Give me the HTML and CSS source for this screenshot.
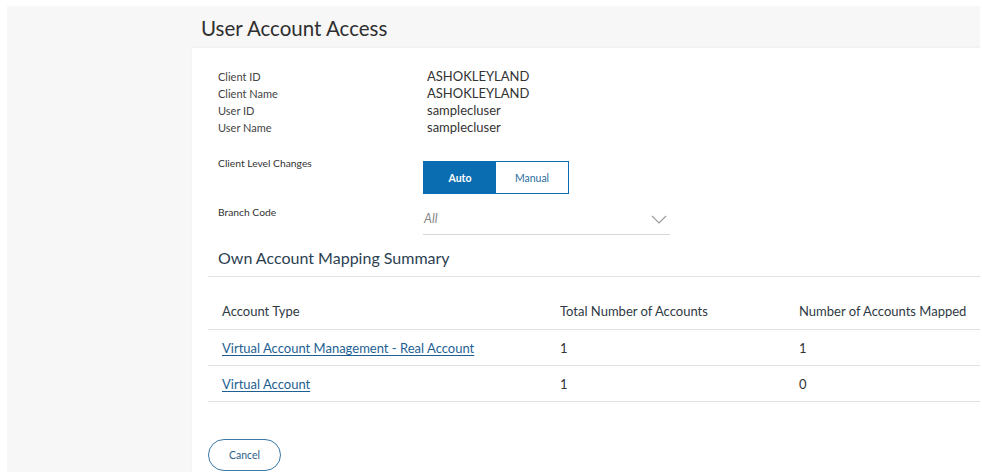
FILE: index.html
```html
<!DOCTYPE html>
<html lang="en">
<head>
<meta charset="utf-8">
<title>User Account Access</title>
<link rel="stylesheet" href="styles.css">
</head>
<body>
<div class="shell">
  <aside class="side"></aside>
  <header class="page-head">
    <h1 class="page-title">User Account Access</h1>
  </header>
  <main class="panel">
    <dl class="info">
      <dt>Client ID</dt><dd>ASHOKLEYLAND</dd>
      <dt>Client Name</dt><dd>ASHOKLEYLAND</dd>
      <dt>User ID</dt><dd>samplecluser</dd>
      <dt>User Name</dt><dd>samplecluser</dd>
    </dl>

    <div class="field field-toggle">
      <span class="field-label">Client Level Changes</span>
      <div class="toggle">
        <button class="toggle-btn active">Auto</button>
        <button class="toggle-btn">Manual</button>
      </div>
    </div>

    <div class="field field-select">
      <span class="field-label">Branch Code</span>
      <div class="select">
        <span class="select-value">All</span>
        <svg class="chevron" width="16" height="9" viewBox="0 0 16 9"><polyline points="1,1 8,8 15,1" fill="none" stroke="#9a9a9a" stroke-width="1.1"/></svg>
      </div>
    </div>

    <section class="summary">
      <h2 class="summary-title">Own Account Mapping Summary</h2>
      <table class="grid">
        <colgroup>
          <col class="c1">
          <col class="c2">
          <col class="c3">
        </colgroup>
        <thead>
          <tr>
            <th>Account Type</th>
            <th>Total Number of Accounts</th>
            <th>Number of Accounts Mapped</th>
          </tr>
        </thead>
        <tbody>
          <tr>
            <td><a href="#">Virtual Account Management - Real Account</a></td>
            <td>1</td>
            <td>1</td>
          </tr>
          <tr>
            <td><a href="#">Virtual Account</a></td>
            <td>1</td>
            <td>0</td>
          </tr>
        </tbody>
      </table>
    </section>

    <div class="actions">
      <button class="btn-outline">Cancel</button>
    </div>
  </main>
</div>
</body>
</html>
```

FILE: styles.css
```css
* { box-sizing: border-box; }

html, body {
  margin: 0;
  padding: 0;
  background: #ffffff;
  font-family: Lato, "Open Sans", Arial, sans-serif;
  color: #333;
}

.shell {
  margin: 6px 2px 0 7px;
  height: 466px;
  background: #f7f7f7;
  display: grid;
  grid-template-columns: 185px 1fr;
  grid-template-rows: 42px 1fr;
  overflow: hidden;
}

.side {
  grid-column: 1;
  grid-row: 1 / span 2;
}

.page-head {
  grid-column: 2;
  grid-row: 1;
  padding-left: 9px;
}

.page-title {
  margin: 0;
  padding-top: 10px;
  font-size: 20.5px;
  line-height: 24px;
  font-weight: 400;
  color: #2f2f2f;
}

.panel {
  grid-column: 2;
  grid-row: 2;
  background: #ffffff;
  box-shadow: 0 -1px 2px rgba(0, 0, 0, 0.04);
  padding: 20px 0 0 0;
}

/* client / user details */
.info {
  margin: 0 0 0 26px;
  display: grid;
  grid-template-columns: 209px auto;
  grid-auto-rows: 17px;
  align-items: baseline;
}

.info dt {
  font-size: 11px;
  color: #444;
  line-height: 17px;
}

.info dd {
  margin: 0;
  font-size: 13px;
  color: #333;
  line-height: 17px;
}

/* label + control rows */
.field {
  display: flex;
  margin-left: 26px;
}

.field-label {
  width: 205px;
  font-size: 10.3px;
  line-height: 14px;
  color: #333;
}

.field-toggle {
  margin-top: 20px;
}

.toggle {
  display: flex;
  margin-top: 5px;
  height: 33px;
  border: 1px solid #0a6db1;
}

.toggle-btn {
  width: 72px;
  border: 0;
  background: #ffffff;
  color: #2a6c9e;
  font-family: inherit;
  font-size: 10.5px;
  padding: 0;
}

.toggle-btn.active {
  width: 72px;
  background: #0a6db1;
  color: #ffffff;
  font-weight: 700;
}

.field-select {
  margin-top: 11px;
}

.select {
  width: 247px;
  height: 30px;
  border-bottom: 1px solid #d6d6d6;
  display: flex;
  justify-content: space-between;
  align-items: flex-start;
  padding: 6px 3px 0 1px;
}

.select-value {
  font-size: 12.5px;
  line-height: 16px;
  font-style: italic;
  color: #8a8a8a;
}

.chevron {
  margin-top: 4px;
}

/* mapping summary */
.summary {
  margin: 13px 0 0 16px;
}

.summary-title {
  margin: 0;
  padding: 0 0 8px 10px;
  font-size: 16px;
  line-height: 20px;
  font-weight: 400;
  color: #2c3f52;
  border-bottom: 1px solid #e2e2e2;
}

.grid {
  width: 100%;
  table-layout: fixed;
  border-collapse: collapse;
  font-size: 13px;
}

.grid .c1 { width: 338px; }
.grid .c2 { width: 239px; }

.grid th,
.grid td {
  text-align: left;
  font-weight: 400;
  color: #333;
  line-height: 16px;
  white-space: nowrap;
  padding: 10px 8px 9px 14px;
  border-bottom: 1px solid #e2e2e2;
}

.grid th {
  padding-top: 26px;
  padding-bottom: 10px;
  color: #2f3a44;
}

.grid a {
  color: #1e5f93;
  text-decoration: underline;
  text-underline-offset: 2px;
}

.actions {
  margin: 37px 0 0 16px;
}

.btn-outline {
  width: 73px;
  height: 32px;
  border: 1.5px solid #3a78a6;
  border-radius: 16px;
  background: #ffffff;
  color: #2b5d85;
  font-family: inherit;
  font-size: 10.5px;
  padding: 0;
}
```
